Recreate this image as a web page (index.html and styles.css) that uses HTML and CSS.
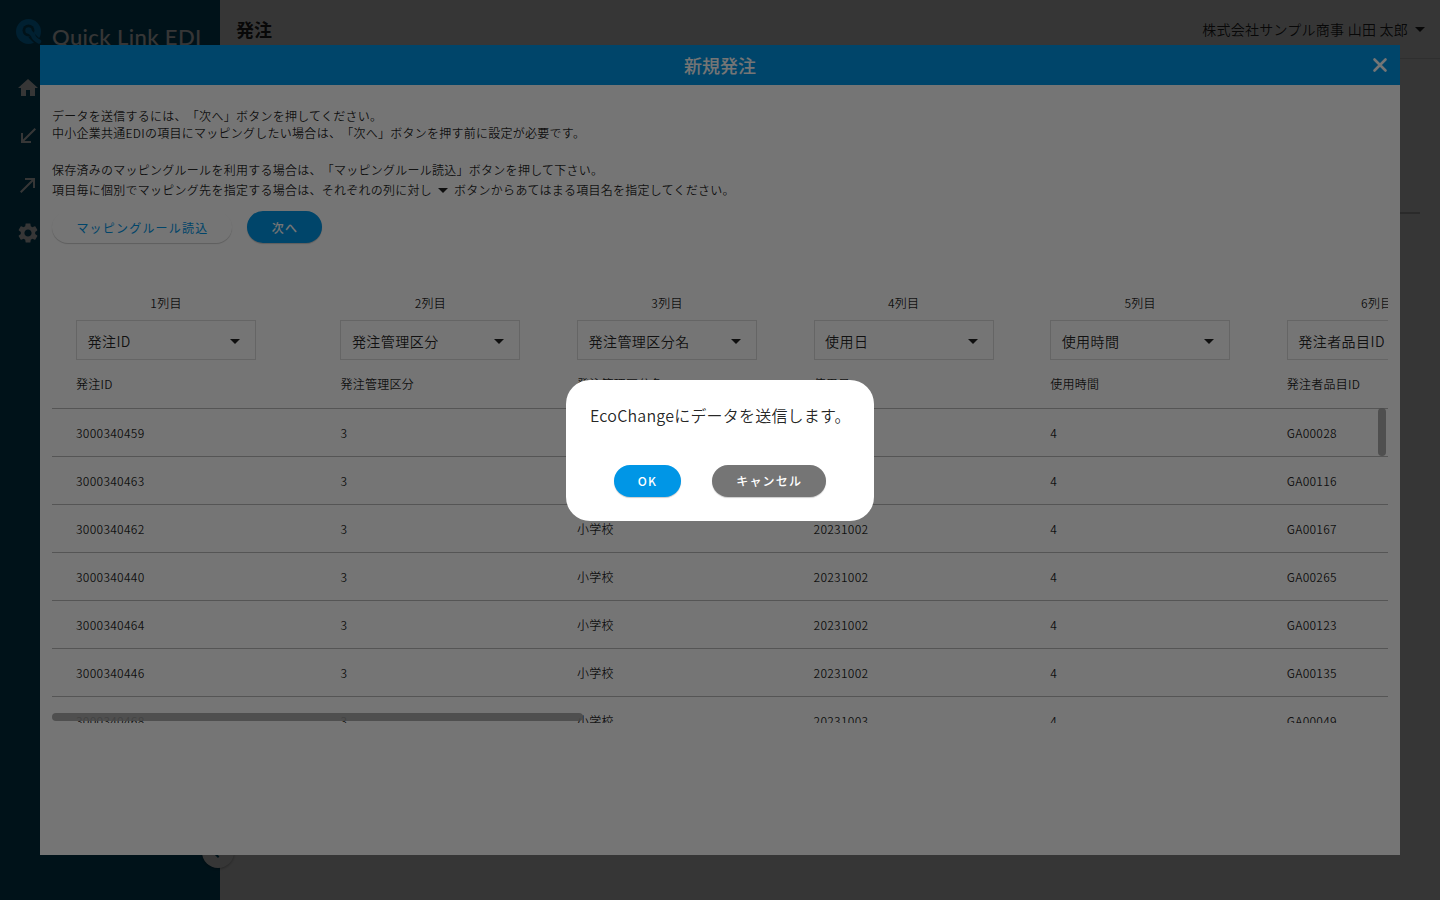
FILE: index.html
```
<!DOCTYPE html>
<html lang="ja">
<head>
    <meta charset="UTF-8">
    <meta name="viewport" content="width=device-width, initial-scale=1.0">
    <title>Quick Link EDI</title>
    <link rel="stylesheet" href="styles.css">
</head>
<body>
    <div class="app">
        <aside class="sidebar">
            <div class="logo">
                <svg class="logo-mark" viewBox="0 0 26 26">
                    <circle class="mark" cx="12.5" cy="12.5" r="12.5"/>
                    <circle class="gap" cx="12.5" cy="11.5" r="6"/>
                    <path class="gap-line" d="M15 16l9 9"/>
                    <circle class="mark" cx="12.5" cy="11.5" r="3.2"/>
                    <path class="tail" d="M13 12l4 4q1 4 6 6.500"/>
                </svg>
                <span class="logo-text">Quick Link EDI</span>
            </div>
            <nav class="menu">
                <svg viewBox="0 0 24 24"><path d="M10 20v-6h4v6h5v-8h3L12 3 2 12h3v8z"/></svg>
                <svg viewBox="0 0 24 24"><path d="M15 19v-2H8.410L20 5.410 18.590 4 7 15.590V9H5v10z"/></svg>
                <svg viewBox="0 0 24 24"><path d="M9 5v2h6.590L4 18.590 5.410 20 17 8.410V15h2V5z"/></svg>
                <svg viewBox="0 0 24 24"><path d="M19.140 12.940c.04-.3.06-.61.06-.94 0-.32-.02-.64-.07-.94l2.030-1.580c.18-.14.23-.41.12-.61l-1.920-3.320c-.12-.22-.37-.29-.59-.22l-2.390.96c-.5-.38-1.030-.7-1.620-.94l-.36-2.540c-.04-.24-.24-.41-.48-.41h-3.840c-.24 0-.43.17-.47.41l-.36 2.540c-.59.24-1.130.57-1.620.94l-2.390-.96c-.22-.08-.47 0-.59.22L2.740 8.870c-.12.21-.08.47.12.61l2.030 1.580c-.05.3-.09.63-.09.94s.02.64.07.94l-2.030 1.580c-.18.14-.23.41-.12.61l1.920 3.320c.12.22.37.29.59.22l2.390-.96c.5.38 1.030.7 1.620.94l.36 2.540c.05.24.24.41.48.41h3.840c.24 0 .44-.17.47-.41l.36-2.540c.59-.24 1.130-.56 1.620-.94l2.390.96c.22.08.47 0 .59-.22l1.920-3.320c.12-.22.07-.47-.12-.61l-2.010-1.580zM12 15.600c-1.980 0-3.600-1.620-3.600-3.600s1.620-3.600 3.600-3.600 3.600 1.620 3.600 3.600-1.620 3.600-3.600 3.600z"/></svg>
            </nav>
        </aside>
        <div class="page">
            <header class="topbar">
                <h1>発注</h1>
                <div class="user">株式会社サンプル商事 山田 太郎<i class="caret"></i></div>
            </header>
            <div class="divider"></div>
        </div>
        <div class="collapse">
            <svg viewBox="0 0 24 24"><path d="M15.410 7.410L14 6l-6 6 6 6 1.410-1.410L10.830 12z"/></svg>
        </div>
    </div>

    <div class="overlay">
        <section class="modal">
            <div class="modal-header">
                <h2>新規発注</h2>
                <svg class="close" viewBox="0 0 16 16"><path d="M2.500 2.500l11 11M13.500 2.500l-11 11"/></svg>
            </div>
            <div class="modal-body">
                <p>データを送信するには、「次へ」ボタンを押してください。<br>中小企業共通EDIの項目にマッピングしたい場合は、「次へ」ボタンを押す前に設定が必要です。</p>
                <p class="rules">保存済みのマッピングルールを利用する場合は、「マッピングルール読込」ボタンを押して下さい。</p>
                <p class="hint">項目毎に個別でマッピング先を指定する場合は、それぞれの列に対し<i class="caret"></i>ボタンからあてはまる項目名を指定してください。</p>
                <div class="actions">
                    <button class="btn btn-outline">マッピングルール読込</button>
                    <button class="btn btn-primary">次へ</button>
                </div>

                <div class="table-wrap">
                    <div class="row head">
                        <div class="cell"><span class="col-no">1列目</span><div class="select">発注ID<i class="caret"></i></div><span>発注ID</span></div>
                        <div class="cell"><span class="col-no">2列目</span><div class="select">発注管理区分<i class="caret"></i></div><span>発注管理区分</span></div>
                        <div class="cell"><span class="col-no">3列目</span><div class="select">発注管理区分名<i class="caret"></i></div><span>発注管理区分名</span></div>
                        <div class="cell"><span class="col-no">4列目</span><div class="select">使用日<i class="caret"></i></div><span>使用日</span></div>
                        <div class="cell"><span class="col-no">5列目</span><div class="select">使用時間<i class="caret"></i></div><span>使用時間</span></div>
                        <div class="cell"><span class="col-no">6列目</span><div class="select">発注者品目ID<i class="caret"></i></div><span>発注者品目ID</span></div>
                    </div>
                    <div class="row"><div class="cell">3000340459</div><div class="cell">3</div><div class="cell"></div><div class="cell"></div><div class="cell">4</div><div class="cell">GA00028</div></div>
                    <div class="row"><div class="cell">3000340463</div><div class="cell">3</div><div class="cell"></div><div class="cell"></div><div class="cell">4</div><div class="cell">GA00116</div></div>
                    <div class="row"><div class="cell">3000340462</div><div class="cell">3</div><div class="cell">小学校</div><div class="cell">20231002</div><div class="cell">4</div><div class="cell">GA00167</div></div>
                    <div class="row"><div class="cell">3000340440</div><div class="cell">3</div><div class="cell">小学校</div><div class="cell">20231002</div><div class="cell">4</div><div class="cell">GA00265</div></div>
                    <div class="row"><div class="cell">3000340464</div><div class="cell">3</div><div class="cell">小学校</div><div class="cell">20231002</div><div class="cell">4</div><div class="cell">GA00123</div></div>
                    <div class="row"><div class="cell">3000340446</div><div class="cell">3</div><div class="cell">小学校</div><div class="cell">20231002</div><div class="cell">4</div><div class="cell">GA00135</div></div>
                    <div class="row"><div class="cell">3000340468</div><div class="cell">3</div><div class="cell">小学校</div><div class="cell">20231003</div><div class="cell">4</div><div class="cell">GA00049</div></div>
                    <div class="scroll-x"></div>
                    <div class="scroll-y"></div>
                </div>
            </div>
        </section>
    </div>

    <div class="overlay">
        <div class="dialog">
            <p>EcoChangeにデータを送信します。</p>
            <div class="dialog-actions">
                <button class="btn btn-primary">OK</button>
                <button class="btn btn-cancel">キャンセル</button>
            </div>
        </div>
    </div>
</body>
</html>
```
FILE: styles.css
```
* {
    box-sizing: border-box;
}
body {
    margin: 0;
    height: 100vh;
    overflow: hidden;
    font-family: "Noto Sans CJK JP", sans-serif;
    font-weight: 350;
    font-size: 12px;
    letter-spacing: 0.26px;
    text-spacing-trim: space-all;
    color: rgba(0, 0, 0, 0.87);
}
h1, h2, p {
    margin: 0;
}
.app {
    display: flex;
    height: 100vh;
    position: relative;
}
.sidebar {
    width: 220px;
    background: #005576;
}
.logo {
    display: flex;
    height: 64px;
    padding: 19px 0 0 16px;
}
.logo-mark {
    width: 26px;
    height: 26px;
}
.mark {
    fill: #0096e6;
}
.gap {
    fill: #005576;
}
.gap-line, .tail {
    fill: none;
    stroke: #005576;
    stroke-width: 7;
}
.tail {
    stroke: #0096e6;
    stroke-width: 4.5;
    stroke-linecap: round;
}
.logo-text {
    margin-left: 10px;
    font-family: Lato, sans-serif;
    font-weight: 500;
    font-size: 22px;
    line-height: 36px;
    letter-spacing: 0.4px;
    white-space: nowrap;
    color: #fff;
}
.menu {
    display: flex;
    flex-direction: column;
    gap: 24.3px;
    padding: 12px 16px;
}
.menu svg {
    width: 24px;
    height: 24px;
    fill: #fff;
}
.page {
    flex: 1;
    background: #fff;
}
.topbar {
    display: flex;
    justify-content: space-between;
    align-items: center;
    height: 59px;
    padding: 0 15px 0 16px;
    border-bottom: 1px solid #dcdcdc;
}
.topbar h1 {
    font-size: 18px;
    font-weight: 700;
    letter-spacing: 0;
}
.user {
    display: flex;
    align-items: center;
    font-size: 14px;
    letter-spacing: 0.24px;
}
.caret {
    display: inline-block;
    border: 5px solid transparent;
    border-top-color: rgba(0, 0, 0, 0.87);
    border-bottom: 0;
}
.user .caret {
    margin-left: 7px;
}
.divider {
    height: 2px;
    margin: 153px 20px 0;
    background: #c8c8c8;
}
.collapse {
    position: absolute;
    left: 202px;
    top: 836px;
    width: 32px;
    height: 32px;
    padding: 4px 2px;
    border-radius: 50%;
    background: #fff;
    box-shadow: 0 1px 3px rgba(0, 0, 0, 0.3);
}
.collapse svg {
    width: 24px;
    height: 24px;
    fill: #005576;
}
.overlay {
    position: fixed;
    inset: 0;
    display: flex;
    align-items: center;
    justify-content: center;
    background: rgba(0, 0, 0, 0.54);
}
.modal {
    width: 1360px;
    height: 810px;
    background: #fff;
}
.modal-header {
    display: grid;
    grid-template-columns: 1fr auto 1fr;
    align-items: center;
    height: 40px;
    padding: 0 12px;
    background: #0096e6;
    color: #fff;
}
.modal-header h2 {
    grid-column: 2;
    font-size: 18px;
    font-weight: 500;
    letter-spacing: 0;
}
.close {
    justify-self: end;
    width: 16px;
    height: 16px;
    stroke: #fff;
    stroke-width: 2.6;
    stroke-linecap: round;
}
.modal-body {
    padding: 22px 12px 0;
    line-height: 17px;
}
.rules {
    margin-top: 20px;
}
.hint {
    margin-top: 3px;
}
.hint .caret {
    margin: 0 6px 2px;
}
.btn {
    height: 32px;
    padding: 0 24px;
    border: 0;
    border-radius: 16px;
    font: 500 12px/32px "Noto Sans CJK JP", sans-serif;
    letter-spacing: 1.2px;
    color: #fff;
    box-shadow: 0 1px 1px rgba(0, 0, 0, 0.2);
}
.btn-outline {
    background: #fff;
    color: #0096e6;
    font-weight: 400;
}
.btn-primary {
    background: #0096e6;
}
.btn-cancel {
    background: #757575;
}
.actions {
    display: flex;
    gap: 15px;
    margin-top: 13px;
}
.actions .btn {
    padding: 1px 24px 0 24.4px;
}
.table-wrap {
    position: relative;
    height: 443px;
    margin-top: 37px;
    overflow: hidden;
}
.row {
    display: grid;
    grid-template-columns: 264.4px repeat(5, 236.6px);
    width: max-content;
    height: 48px;
    border-bottom: 1px solid #b9b9b9;
    line-height: 47px;
}
.cell {
    padding-left: 24px;
}
.head {
    height: 129px;
    line-height: 17px;
}
.head .cell {
    display: flex;
    flex-direction: column;
    padding-top: 14px;
}
.col-no {
    width: 180px;
    text-align: center;
}
.select {
    display: flex;
    align-items: center;
    justify-content: space-between;
    width: 180px;
    height: 40px;
    margin: 9px 0 15px;
    padding: 2px 15px 0 10.5px;
    border: 1px solid #dcdcdc;
    font-size: 14px;
    letter-spacing: 0.45px;
}
.scroll-x, .scroll-y {
    position: absolute;
    border-radius: 4px;
    background: rgba(160, 160, 160, 0.88);
}
.scroll-x {
    left: 0;
    bottom: 2px;
    width: 531px;
    height: 8px;
}
.scroll-y {
    right: 2px;
    top: 128px;
    width: 8px;
    height: 48px;
}
.dialog {
    width: 308px;
    height: 141px;
    padding: 23px 24px;
    border-radius: 24px;
    background: #fff;
    font-size: 16px;
    line-height: 24px;
    letter-spacing: 0.2px;
}
.dialog p {
    white-space: nowrap;
}
.dialog-actions {
    display: flex;
    justify-content: center;
    gap: 31px;
    margin-top: 38px;
}
```
